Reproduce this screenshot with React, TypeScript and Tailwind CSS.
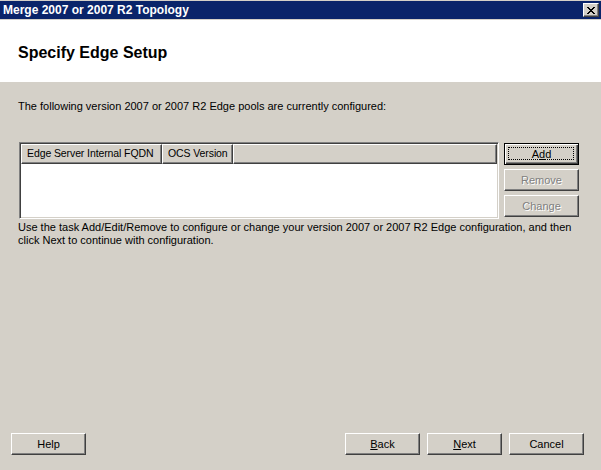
import React from "react";

const raised =
  "border border-t-white border-l-white border-r-[#404040] border-b-[#404040] shadow-[inset_-1px_-1px_0_#808080]";

function Btn({
  children,
  disabled,
  isDefault,
}: {
  children: React.ReactNode;
  disabled?: boolean;
  isDefault?: boolean;
}) {
  if (isDefault) {
    return (
      <div className="relative w-[75px] h-[22px] bg-[#d4d0c8] border border-black shadow-[inset_1px_1px_0_#fff,inset_-1px_-1px_0_#404040,inset_-2px_-2px_0_#808080] flex items-center justify-center text-black">
        <span className="absolute left-[3px] top-[3px] right-[4px] bottom-[4px] border border-dotted border-black" />
        {children}
      </div>
    );
  }
  return (
    <div
      className={`w-[75px] h-[22px] bg-[#d4d0c8] ${raised} flex items-center justify-center ${
        disabled ? "text-[#808080] [text-shadow:1px_1px_0_#fff]" : "text-black"
      }`}
    >
      {children}
    </div>
  );
}

function HeaderCell({ w, children }: { w?: string; children?: React.ReactNode }) {
  return (
    <div
      className={`${w ?? "flex-1"} h-[20px] bg-[#d4d0c8] border border-t-white border-l-white border-r-[#404040] border-b-[#404040] shadow-[inset_-1px_-1px_0_#808080] flex items-center pl-[5px] whitespace-nowrap overflow-hidden text-[10.5px] tracking-[-0.1px]`}
    >
      {children}
    </div>
  );
}

export default function App() {
  return (
    <div className="w-[601px] h-[470px] bg-[#d4d0c8] flex flex-col font-['Liberation_Sans',Arial,sans-serif] text-[11px] text-black overflow-hidden">
      {/* Title bar */}
      <div className="h-[19px] border-t border-[#d4d0c8] bg-[#0a246a] flex items-center justify-between pl-[3px] pr-[2px]">
        <span className="text-white font-bold text-[12px] leading-none">
          Merge 2007 or 2007 R2 Topology
        </span>
        <div className="w-[16px] h-[14px] bg-[#d4d0c8] border border-t-white border-l-white border-r-[#404040] border-b-[#404040] shadow-[inset_-1px_-1px_0_#808080] flex items-center justify-center">
          <svg width="8" height="7" viewBox="0 0 8 7" shapeRendering="crispEdges">
            <path
              d="M0 0h2v1h-2zM6 0h2v1h-2zM1 1h2v1h-2zM5 1h2v1h-2zM2 2h4v1h-4zM3 3h2v1h-2zM2 4h4v1h-4zM1 5h2v1h-2zM5 5h2v1h-2zM0 6h2v1h-2zM6 6h2v1h-2z"
              fill="#000"
            />
          </svg>
        </div>
      </div>

      {/* White header */}
      <div className="h-[63px] bg-white border-t border-[#d4d0c8] pl-[18px] pt-[23px]">
        <h1 className="text-[16px] font-bold leading-[20px]">Specify Edge Setup</h1>
      </div>

      {/* Body */}
      <div className="flex-1 flex flex-col pl-[18px] pt-[18px]">
        <p className="leading-[13px]">
          The following version 2007 or 2007 R2 Edge pools are currently configured:
        </p>

        <div className="flex mt-[29px] pl-[1px]">
          <div className="w-[480px] h-[77px] bg-white border border-t-[#808080] border-l-[#808080] border-r-white border-b-white shadow-[inset_1px_1px_0_#404040,inset_-1px_-1px_0_#d4d0c8] p-[1px]">
            <div className="flex">
              <HeaderCell w="w-[141px]">Edge Server Internal FQDN</HeaderCell>
              <HeaderCell w="w-[71px]">OCS Version</HeaderCell>
              <HeaderCell />
            </div>
          </div>
          <div className="ml-[5px] flex flex-col gap-[4px] pt-[1px]">
            <Btn isDefault>
              <span>
                A<span className="underline">d</span>d
              </span>
            </Btn>
            <Btn disabled>Remove</Btn>
            <Btn disabled>Change</Btn>
          </div>
        </div>

        <p className="leading-[13px] mt-[2px] pr-[20px]">
          Use the task Add/Edit/Remove to configure or change your version 2007 or 2007 R2 Edge configuration, and then
          click Next to continue with configuration.
        </p>
      </div>

      {/* Footer */}
      <div className="flex items-center justify-between pl-[11px] pr-[17px] pb-[15px]">
        <Btn>Help</Btn>
        <div className="flex gap-[7px]">
          <Btn>
            <span>
              <span className="underline">B</span>ack
            </span>
          </Btn>
          <Btn>
            <span>
              <span className="underline">N</span>ext
            </span>
          </Btn>
          <Btn>Cancel</Btn>
        </div>
      </div>
    </div>
  );
}
